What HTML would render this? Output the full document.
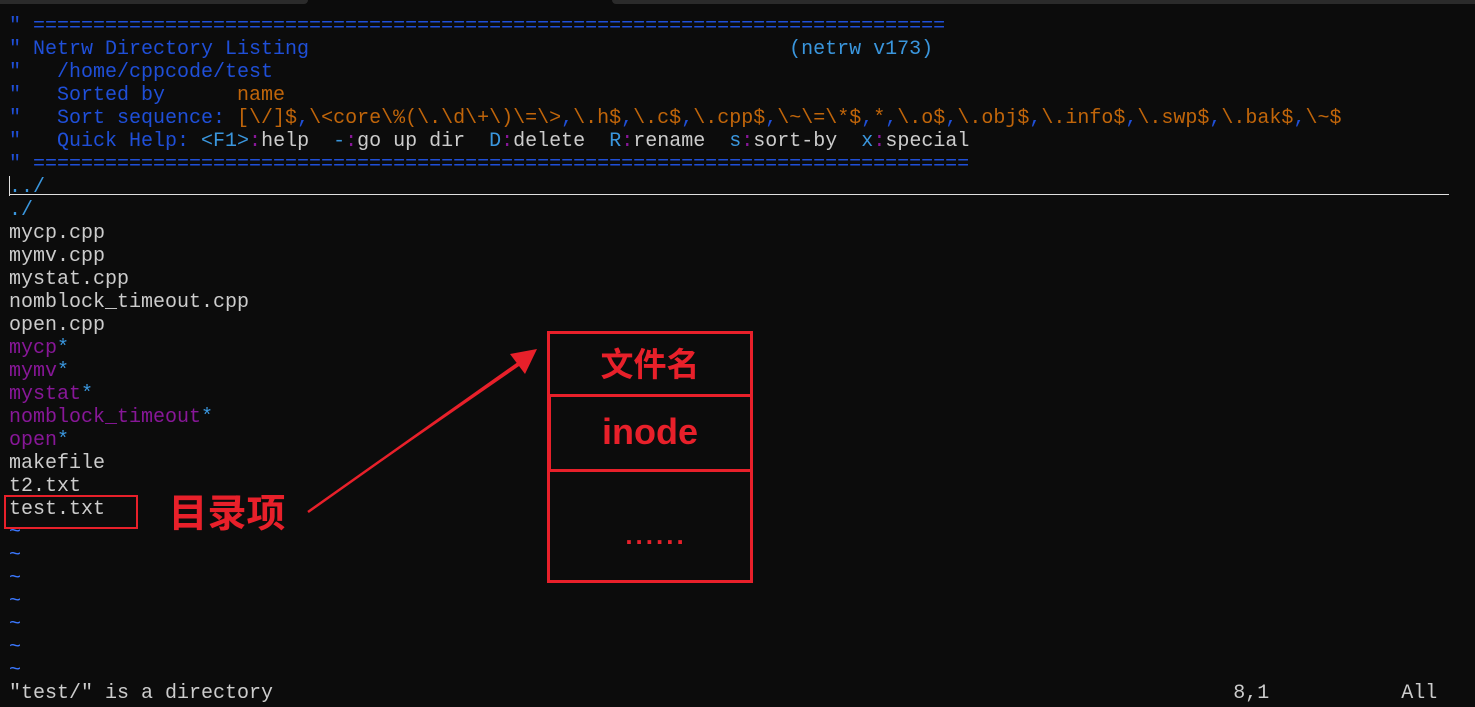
<!DOCTYPE html>
<html><head><meta charset="utf-8"><style>
body{margin:0;width:1475px;height:707px;background:#0c0c0c;overflow:hidden;position:relative}
.t1{position:absolute;top:0;left:0;width:308px;height:4px;background:#2b2b2b;border-radius:0 0 4px 0}
.t2{position:absolute;top:0;left:612px;width:863px;height:4px;background:#2b2b2b;border-radius:0 0 0 4px}
pre{position:absolute;left:9px;top:15px;margin:0;font-family:"Liberation Mono","DejaVu Sans Mono",monospace;font-size:20px;line-height:23px;color:#cccccc;letter-spacing:0}
.b{color:#1f4fd8}.c{color:#3a96dd}.o{color:#c0650a}.m{color:#881798}
.t{color:#3b78ff}
.cur{position:absolute;left:9px;top:194px;width:1440px;height:1px;background:#e0e0e0}
.cb{position:absolute;left:9px;top:176px;width:1px;height:20px;background:#e0e0e0}
.r{position:absolute;border:3px solid #e8202a;box-sizing:border-box}
.lbl{position:absolute;color:#e8202a;font-family:"Liberation Sans","Noto Sans CJK SC",sans-serif;font-weight:bold;text-align:center}
</style></head><body>
<div class="t1"></div><div class="t2"></div>
<pre><span class="b">" ============================================================================</span>
<span class="b">" Netrw Directory Listing                                        </span><span class="c">(netrw v173)</span>
<span class="b">"   /home/cppcode/test</span>
<span class="b">"   Sorted by      </span><span class="o">name</span>
<span class="b">"   Sort sequence: </span><span class="o">[\/]$</span><span class="b">,</span><span class="o">\&lt;core\%(\.\d\+\)\=\&gt;</span><span class="b">,</span><span class="o">\.h$</span><span class="b">,</span><span class="o">\.c$</span><span class="b">,</span><span class="o">\.cpp$</span><span class="b">,</span><span class="o">\~\=\*$</span><span class="b">,</span><span class="o">*</span><span class="b">,</span><span class="o">\.o$</span><span class="b">,</span><span class="o">\.obj$</span><span class="b">,</span><span class="o">\.info$</span><span class="b">,</span><span class="o">\.swp$</span><span class="b">,</span><span class="o">\.bak$</span><span class="b">,</span><span class="o">\~$</span>
<span class="b">"   Quick Help: </span><span class="c">&lt;F1&gt;</span><span class="m">:</span>help  <span class="c">-</span><span class="m">:</span>go up dir  <span class="c">D</span><span class="m">:</span>delete  <span class="c">R</span><span class="m">:</span>rename  <span class="c">s</span><span class="m">:</span>sort-by  <span class="c">x</span><span class="m">:</span>special
<span class="b">" ==============================================================================</span>
<span class="c">../</span>
<span class="c">./</span>
mycp.cpp
mymv.cpp
mystat.cpp
nomblock_timeout.cpp
open.cpp
<span class="m">mycp</span><span class="c">*</span>
<span class="m">mymv</span><span class="c">*</span>
<span class="m">mystat</span><span class="c">*</span>
<span class="m">nomblock_timeout</span><span class="c">*</span>
<span class="m">open</span><span class="c">*</span>
makefile
t2.txt
test.txt
<span class="t">~</span>
<span class="t">~</span>
<span class="t">~</span>
<span class="t">~</span>
<span class="t">~</span>
<span class="t">~</span>
<span class="t">~</span>
"test/" is a directory                                                                                8,1           All</pre>
<div class="cur"></div><div class="cb"></div>
<div class="r" style="left:4px;top:495px;width:134px;height:34px;border-width:2px"></div>
<div class="r" style="left:547px;top:331px;width:206px;height:252px"></div>
<div class="r" style="left:548px;top:394px;width:205px;height:78px"></div>
<div class="lbl" style="left:548px;top:343px;width:204px;font-size:33px;line-height:44px">文件名</div>
<div class="lbl" style="left:548px;top:410px;width:204px;font-size:36px;line-height:44px">inode</div>
<div class="lbl" style="left:554px;top:520px;width:204px;font-size:26px;line-height:30px;letter-spacing:3px">......</div>
<div class="lbl" style="left:163px;top:492px;width:128px;font-size:39px;line-height:46px">目录项</div>
<svg style="position:absolute;left:0;top:0" width="1475" height="707">
<polygon points="308,512 520,361 522,364" fill="#e8202a"/>
<line x1="308" y1="512" x2="520" y2="362" stroke="#e8202a" stroke-width="2.5"/>
<polygon points="537,349 510,354 525,374" fill="#e8202a"/>
</svg>
</body></html>
